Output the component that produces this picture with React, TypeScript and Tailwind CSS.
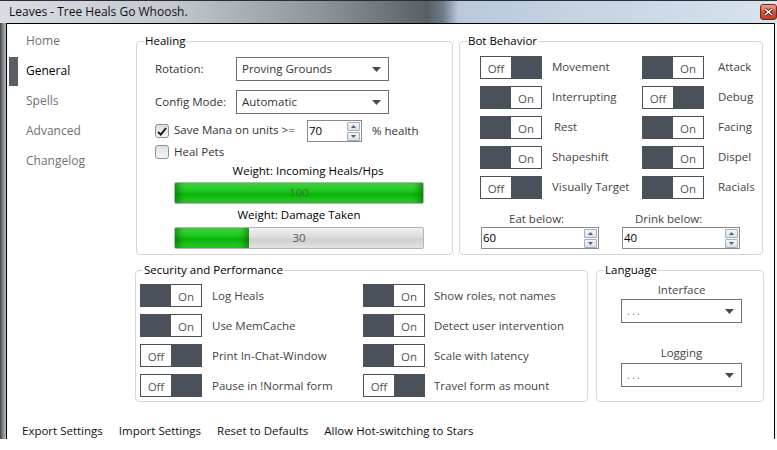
import React from "react";

type Row = [boolean, string];

const botLeft: Row[] = [
  [false, "Movement"],
  [true, "Interrupting"],
  [true, "Rest"],
  [true, "Shapeshift"],
  [false, "Visually Target"],
];
const botRight: Row[] = [
  [true, "Attack"],
  [false, "Debug"],
  [true, "Facing"],
  [true, "Dispel"],
  [true, "Racials"],
];
const secLeft: Row[] = [
  [true, "Log Heals"],
  [true, "Use MemCache"],
  [false, "Print In-Chat-Window"],
  [false, "Pause in !Normal form"],
];
const secRight: Row[] = [
  [true, "Show roles, not names"],
  [true, "Detect user intervention"],
  [true, "Scale with latency"],
  [false, "Travel form as mount"],
];

const navItems = ["Home", "General", "Spells", "Advanced", "Changelog"];

function Toggle({ on }: { on: boolean }) {
  return (
    <div className="flex h-[23px] w-[62px] shrink-0 border border-[#4b515a] bg-white text-[#555]">
      {on ? (
        <>
          <div className="w-[30px] bg-[#4b515a]" />
          <div className="flex flex-1 items-center justify-center pt-[2px]">On</div>
        </>
      ) : (
        <>
          <div className="flex flex-1 items-center justify-center pt-[2px]">Off</div>
          <div className="w-[30px] bg-[#4b515a]" />
        </>
      )}
    </div>
  );
}

function Arrow() {
  return (
    <svg width="9" height="5" viewBox="0 0 9 5" className="shrink-0">
      <path d="M0 0 H9 L4.5 5 Z" fill="#4a4a4a" />
    </svg>
  );
}

function Dropdown({ value, className, dim }: { value: string; className: string; dim?: boolean }) {
  return (
    <div className={`flex items-center border border-[#707070] bg-white pl-[5px] pr-[7px] ${className}`}>
      <span className={`flex-1 ${dim ? "text-[#888] tracking-[2px]" : "text-[#333]"}`}>{value}</span>
      <Arrow />
    </div>
  );
}

function SpinBtn({ up }: { up?: boolean }) {
  return (
    <div className="flex h-[9px] w-[13px] items-center justify-center rounded-[1px] border border-[#a3adbb] bg-[linear-gradient(180deg,#f4f6fa,#dae0e9)]">
      <svg width="5" height="3" viewBox="0 0 5 3">
        <path d={up ? "M0 3 L2.5 0 L5 3 Z" : "M0 0 L5 0 L2.5 3 Z"} fill="#4d5f78" />
      </svg>
    </div>
  );
}

function Spinner({ value, className }: { value: string; className: string }) {
  return (
    <div className={`flex h-[22px] border border-[#8a8a8a] bg-white ${className}`}>
      <span className="flex-1 pl-[1px] leading-[20px] text-black">{value}</span>
      <div className="flex flex-col justify-center gap-px pr-[1px]">
        <SpinBtn up />
        <SpinBtn />
      </div>
    </div>
  );
}

function Checkbox({ checked }: { checked?: boolean }) {
  return (
    <div className="flex h-[14px] w-[14px] shrink-0 items-center justify-center rounded-[3px] border border-[#8e8f8f] bg-[linear-gradient(180deg,#dedede,#f7f7f7)]">
      {checked && (
        <svg width="10" height="9" viewBox="0 0 10 9">
          <path d="M1 5 L3.8 7.6 L9 1" fill="none" stroke="#1a1a1a" strokeWidth="2" />
        </svg>
      )}
    </div>
  );
}

function Bar({ pct, label, full }: { pct: number; label: string; full?: boolean }) {
  return (
    <div className="relative h-[22px] w-[250px] overflow-hidden rounded-[2px] border border-[#b4b4b4] bg-[linear-gradient(180deg,#f0f0f0,#dcdcdc_45%,#cfcfcf_55%,#e2e2e2)]">
      <div
        className="h-full bg-[linear-gradient(180deg,#4ad84a,#17c317_45%,#07b407_55%,#30cf30)] shadow-[inset_8px_0_7px_-4px_rgba(0,90,0,0.55),inset_-8px_0_7px_-4px_rgba(0,90,0,0.55)]"
        style={{ width: `${pct}%` }}
      />
      <span
        className={`absolute inset-0 flex items-center justify-center ${full ? "text-[#2f7a2f]" : "text-[#555]"}`}
      >
        {label}
      </span>
    </div>
  );
}

function Group({ title, className, children }: { title: string; className: string; children: React.ReactNode }) {
  return (
    <fieldset className={`shrink-0 rounded-[4px] border border-[#d6d6d6] ${className}`}>
      <legend className="ml-[7px] px-[1px] leading-[16px] text-black">{title}</legend>
      {children}
    </fieldset>
  );
}

export default function App() {
  return (
    <div className="flex h-[450px] w-[777px] flex-col overflow-hidden bg-white font-['Open_Sans',sans-serif] text-[11.5px]">
      {/* aero title bar */}
      <div className="flex h-[23px] shrink-0 items-center justify-between border-t border-[#2b2f33] bg-[linear-gradient(90deg,#d7dde3_0%,#c3c9cf_22%,#8d9297_42%,#5a5f64_55%,#6d7a88_57%,#b9c9db_59%,#c5d3e2_75%,#d8e3ee_100%)]">
        <span className="pl-[9px] text-[12px] leading-[16px] text-[#111]">Leaves - Tree Heals Go Whoosh.</span>
        <div className="flex h-[16px] w-[17px] items-center justify-center rounded-[3px] border border-[#6e2a1d] bg-[linear-gradient(180deg,#eba48f,#d2553a_50%,#c23e22)]">
          <svg width="9" height="8" viewBox="0 0 9 8">
            <path d="M1 1 L8 7 M8 1 L1 7" stroke="#3b1810" strokeWidth="3" />
            <path d="M1 1 L8 7 M8 1 L1 7" stroke="#fff" strokeWidth="1.6" />
          </svg>
        </div>
      </div>

      <div className="flex h-[416px] shrink-0">
        <div className="w-[6px] bg-[linear-gradient(90deg,#41464b,#8d9399_60%,#b5babf)]" />
        <div className="flex w-[769px] flex-col border-x border-t border-black bg-white">
          <div className="flex h-[382px]">
            {/* sidebar nav */}
            <nav className="flex w-[128px] shrink-0 flex-col pt-[2px] text-[12px]">
              {navItems.map((n) => (
                <div key={n} className="flex h-[30px] items-center">
                  <div className={`ml-[2px] h-[29px] w-[9px] ${n === "General" ? "bg-[#5a5f66]" : ""}`} />
                  <span className={`ml-[8px] ${n === "General" ? "text-black" : "text-[#707070]"}`}>{n}</span>
                </div>
              ))}
            </nav>

            <div className="flex flex-col pt-[9px]">
              <div className="flex">
                {/* Healing */}
                <Group title="Healing" className="ml-[1px] h-[222px] w-[317px]">
                  <div className="flex flex-col pl-[18px] pt-[8px] text-[#333]">
                    <div className="flex h-[24px] items-center">
                      <span className="w-[81px]">Rotation:</span>
                      <Dropdown value="Proving Grounds" className="h-[24px] w-[153px]" />
                    </div>
                    <div className="mt-[9px] flex h-[24px] items-center">
                      <span className="w-[81px]">Config Mode:</span>
                      <Dropdown value="Automatic" className="h-[24px] w-[153px]" />
                    </div>
                    <div className="mt-[6px] flex h-[22px] items-center">
                      <Checkbox checked />
                      <span className="ml-[5px] w-[133px] -translate-y-[1px]">Save Mana on units &gt;=</span>
                      <Spinner value="70" className="w-[55px]" />
                      <span className="ml-[10px]">% health</span>
                    </div>
                    <div className="mt-[2px] flex h-[16px] items-center">
                      <Checkbox />
                      <span className="ml-[5px]">Heal Pets</span>
                    </div>
                    <div className="ml-[19px] mt-[3px] w-[250px] pl-[18px] text-center leading-[16px] text-black">
                      Weight: Incoming Heals/Hps
                    </div>
                    <div className="ml-[19px] mt-[3px]">
                      <Bar pct={100} label="100" full />
                    </div>
                    <div className="ml-[19px] mt-[3px] w-[250px] text-center leading-[16px] text-black">
                      Weight: Damage Taken
                    </div>
                    <div className="ml-[19px] mt-[4px]">
                      <Bar pct={30} label="30" />
                    </div>
                  </div>
                </Group>

                {/* Bot Behavior */}
                <Group title="Bot Behavior" className="ml-[6px] h-[222px] w-[304px]">
                  <div className="flex flex-col gap-[7px] pl-[20px] pt-[7px] text-[#444]">
                    {botLeft.map(([on, label], i) => (
                      <div key={label} className="flex h-[23px] items-center">
                        <Toggle on={on} />
                        <span className={`w-[100px] -translate-y-[1px] ${label === "Rest" ? "pl-[12px]" : "pl-[10px]"}`}>{label}</span>
                        <Toggle on={botRight[i][0]} />
                        <span className="-translate-y-[1px] pl-[14px]">{botRight[i][1]}</span>
                      </div>
                    ))}
                  </div>
                  <div className="mt-[12px] flex gap-[23px] pl-[21px] text-[#444]">
                    <div className="flex flex-col">
                      <span className="pl-[28px] leading-[16px]">Eat below:</span>
                      <Spinner value="60" className="w-[118px]" />
                    </div>
                    <div className="flex flex-col">
                      <span className="pl-[13px] leading-[16px]">Drink below:</span>
                      <Spinner value="40" className="w-[118px]" />
                    </div>
                  </div>
                </Group>
              </div>

              <div className="mt-[7px] flex">
                {/* Security and Performance */}
                <Group title="Security and Performance" className="h-[140px] w-[453px]">
                  <div className="flex flex-col gap-[7px] pl-[4px] pt-[6px] text-[#444]">
                    {secLeft.map(([on, label], i) => (
                      <div key={label} className="flex h-[23px] items-center">
                        <Toggle on={on} />
                        <span className="w-[161px] pl-[10px]">{label}</span>
                        <Toggle on={secRight[i][0]} />
                        <span className="pl-[9px]">{secRight[i][1]}</span>
                      </div>
                    ))}
                  </div>
                </Group>

                {/* Language */}
                <Group title="Language" className="ml-[8px] h-[140px] w-[168px]">
                  <div className="flex flex-col pl-[24px] pt-[4px] text-[#444]">
                    <span className="w-[121px] text-center leading-[16px]">Interface</span>
                    <Dropdown value="..." dim className="mt-[1px] h-[24px] w-[121px]" />
                    <span className="mt-[22px] w-[121px] text-center leading-[16px]">Logging</span>
                    <Dropdown value="..." dim className="mt-[2px] h-[24px] w-[121px]" />
                  </div>
                </Group>
              </div>
            </div>
          </div>

          {/* footer actions */}
          <div className="flex gap-[16px] pl-[15px] pt-[17px] leading-[16px] text-[#111]">
            <span>Export Settings</span>
            <span>Import Settings</span>
            <span>Reset to Defaults</span>
            <span>Allow Hot-switching to Stars</span>
          </div>
        </div>
        <div className="flex-1 bg-[#f3f3f3]" />
      </div>
      <div className="flex-1 bg-white" />
    </div>
  );
}
